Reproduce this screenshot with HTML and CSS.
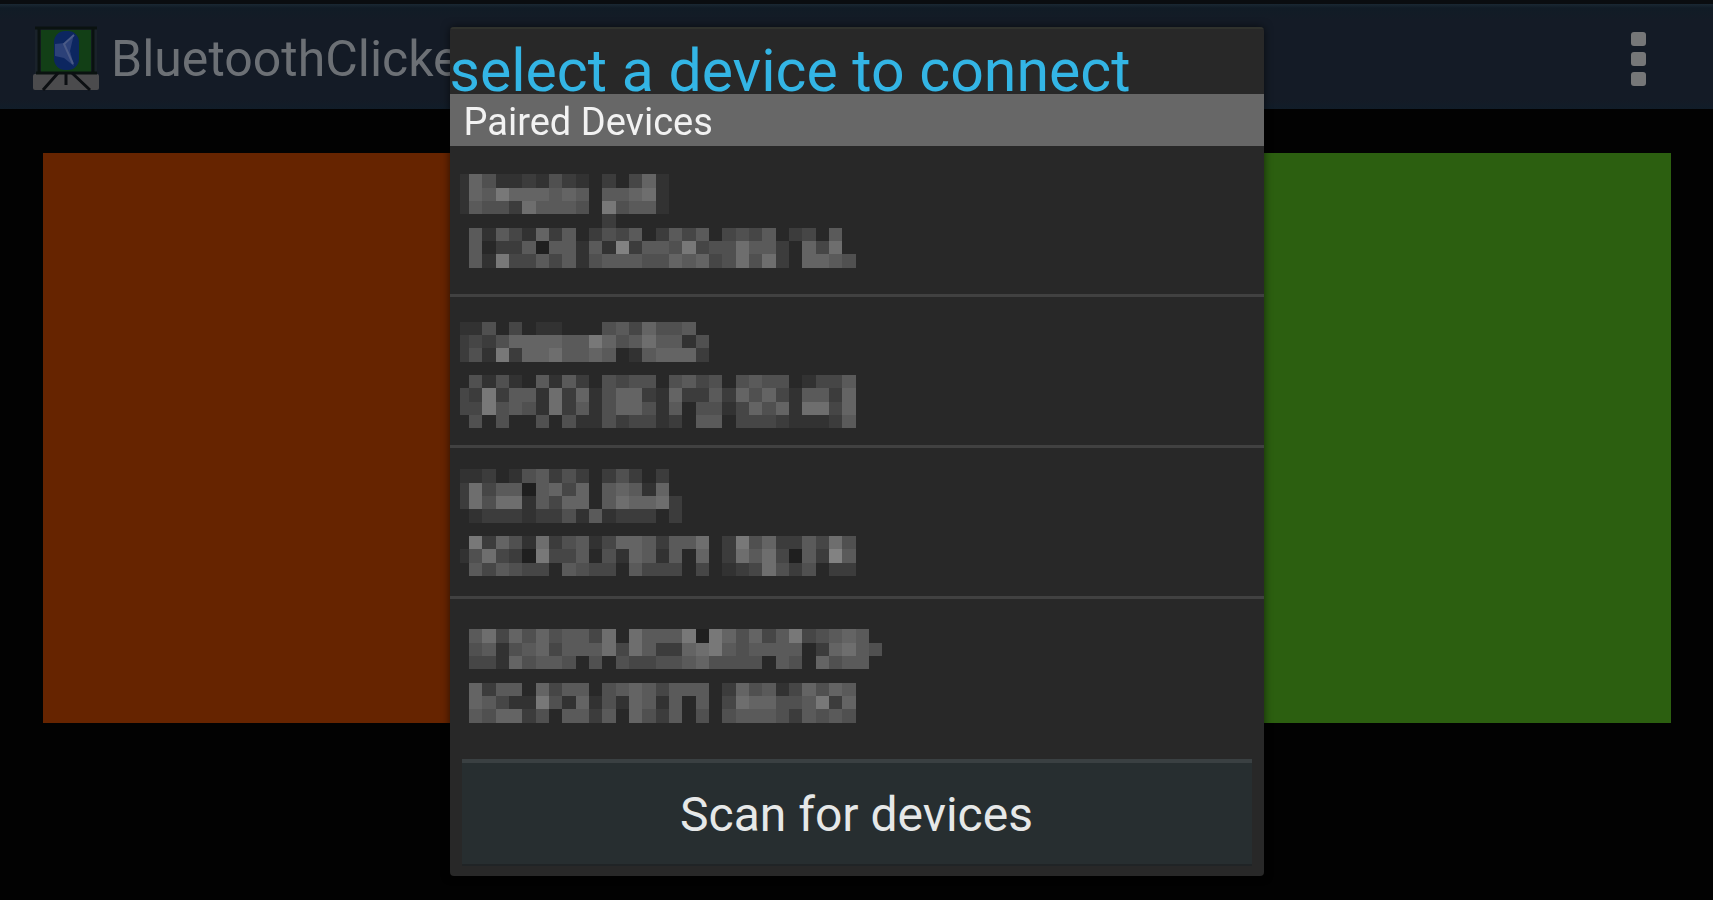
FILE: index.html
```html
<!DOCTYPE html>
<html lang="en">

<head>
    <meta charset="utf-8">
    <title>BluetoothClicker</title>
    <link rel="stylesheet" href="styles.css">
</head>

<body>
    <div class="app">
        <header class="appbar">
            <svg class="logo" viewBox="0 0 66 66">
                <rect x="0" y="48" width="66" height="16" rx="2" fill="#4b4b4d" />
                <rect x="2" y="2" width="62" height="46" fill="#1a222a" />
                <rect x="8" y="4" width="50" height="42" fill="#123f16" />
                <path d="M2 2H64M6 2V46M60 2V46M3 47H64" stroke="#0a1210" stroke-width="3" fill="none" />
                <path d="M33 47V59M25 47L10 64M39 47L57 64" stroke="#0c0f12" stroke-width="3" fill="none" />
                <rect x="21" y="5" width="25" height="39" rx="11" fill="#0c2660" />
                <path d="M41 8L32 17L22 18V30L31 32L41 40L37 25Z" fill="#2c4178" />
                <path d="M41 9L31 18L40 38" stroke="#4a5a86" stroke-width="2" fill="none" />
            </svg>
            <h1>BluetoothClicker</h1>
            <button class="menubtn" aria-label="More options">
                <span></span>
                <span></span>
                <span></span>
            </button>
        </header>
        <main class="pads">
            <button class="pad prev" aria-label="Previous"></button>
            <button class="pad next" aria-label="Next"></button>
        </main>
    </div>

    <div class="overlay">
        <div class="dialog" role="dialog" aria-labelledby="dialogtitle">
            <h2 id="dialogtitle">select a device to connect</h2>
            <h3>Paired Devices</h3>
            <ul id="devicelist"></ul>
            <div class="footer">
                <button id="scanbtn">Scan for devices</button>
            </div>
        </div>
    </div>
    <script src="script.js"></script>
</body>

</html>
```
FILE: styles.css
```css
* {
    box-sizing: border-box;
    margin: 0px;
    padding: 0px;
    font-family: Roboto, sans-serif;
    font-weight: 400;
}

body {
    background-color: #020202;
}

button {
    border: none;
    background: none;
}

.app {
    min-height: 100vh;
    display: flex;
    flex-direction: column;
}

.appbar {
    height: 109px;
    padding: 4px 67px 0px 33px;
    display: flex;
    align-items: center;
    gap: 12px;
    border-top: 4px solid #0a0d10;
    background: linear-gradient(#1a2833 0px, #111c26 4px, #141b26 16px, #141b26 96px, #111d29 105px);
}

.logo {
    width: 66px;
    height: 66px;
}

.appbar h1 {
    flex: 1;
    font-size: 50px;
    line-height: 60px;
    color: #6c7075;
}

.menubtn {
    display: flex;
    flex-direction: column;
    gap: 6px;
}

.menubtn span {
    width: 15px;
    height: 14px;
    border-radius: 3px;
    background-color: #767778;
}

.pads {
    flex: 1;
    display: flex;
    gap: 12px;
    padding: 44px 42px 177px 43px;
}

.pad {
    flex: 1;
}

.prev {
    background-color: #662400;
}

.next {
    background-color: #2c5f10;
}

.overlay {
    position: fixed;
    inset: 0px;
    display: flex;
    justify-content: center;
    align-items: flex-start;
    padding-top: 27px;
}

.dialog {
    width: 814px;
    max-width: 100%;
    border-radius: 4px;
    overflow: hidden;
    background-color: #282828;
    box-shadow: 0px 0px 8px rgba(0, 0, 0, 0.6);
}

.dialog h2 {
    height: 67px;
    padding-top: 10px;
    border-top: 2px solid #30322d;
    font-size: 59px;
    line-height: 64px;
    white-space: nowrap;
    color: #33b5e5;
}

.dialog h3 {
    padding: 4px 14px 0px;
    font-size: 38px;
    line-height: 48px;
    color: #f2f2f2;
    background-color: #676767;
}

li {
    list-style: none;
    border-bottom: 3px solid #414141;
}

li:last-child {
    border-bottom: none;
}

.device {
    display: block;
    width: 100%;
    padding-left: 10px;
}

.device svg {
    display: block;
    width: 424px;
    height: 148px;
}

.footer {
    padding: 12px 12px 10px;
}

#scanbtn {
    width: 100%;
    height: 107px;
    padding-top: 2px;
    border-top: 4px solid #3a4042;
    border-bottom: 2px solid #202426;
    font-size: 48px;
    line-height: 60px;
    color: #e6e8e8;
    background-color: #272e30;
}
```
FILE: script.js
```js
// each digit is the brightness of one block, a dot is an empty block
const devices = [
    {
        top: 85,
        rows: [
            "1641121421.2.361",
            "1658666565.55671",
            "1544275554.84551",
            "...........2",
            ".51531625.2435.2535.3435.23.5",
            ".5.2250551519255483447552.637",
            ".518335351455544656347472.6654"
        ]
    },
    {
        top: 74,
        rows: [
            "114.3.11...4536445",
            "2324666655864575514",
            "241826675565.156662",
            "",
            ".4141.5152.4344.4534.4544.1335",
            "328255172614662162252646315526",
            "33845417251466415.441364617736",
            ".4.4..4.411423312.55.333211125"
        ]
    },
    {
        top: 64,
        rows: [
            "112.145242.242.2",
            "2735505636.56516",
            "2747715366.576672",
            ".12221224151222.2",
            "",
            ".826417245136652557.2846225374",
            "1473208335.416515.6.2757305295",
            ".535433.5433.5333.3.1237424.22"
        ]
    },
    {
        top: 91,
        rows: [
            ".57364645537.755580864635834565",
            ".45145635557375226785" + "45555.26754",
            ".33164554.4.43344564444.54.6455",
            "",
            ".6255.6355.45653555.2645136465",
            ".6531184161416515.5.3766445826",
            ".546624.5525.6425.4.4555425454"
        ]
    }
];

const CELL = 40;
const LEFT = -13;

const drawMosaic = (device) => {
    let rects = "";
    device.rows.forEach((row, y) => {
        [...row].forEach((level, x) => {
            if (level == ".") return;
            const gray = level == "0" ? 31 : 40 + level * 10;
            rects += `<rect x="${LEFT + x * CELL}" y="${device.top + y * CELL}" width="${CELL}" height="${CELL}" fill="rgb(${gray},${gray},${gray})"/>`;
        });
    });
    return `<svg viewBox="0 0 1272 444" shape-rendering="crispEdges" aria-hidden="true">${rects}</svg>`;
}

const devicelist = document.getElementById("devicelist");

for (const device of devices) {
    const row = document.createElement("li");
    row.innerHTML = `<button class="device" aria-label="Paired device">${drawMosaic(device)}</button>`;
    devicelist.appendChild(row);
}
```
